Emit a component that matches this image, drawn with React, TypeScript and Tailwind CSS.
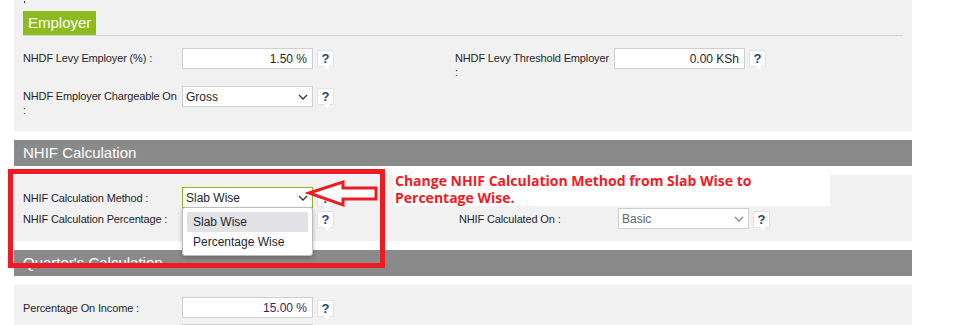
import React from 'react';

const labelCls = "w-[159px] shrink-0 whitespace-nowrap text-[11px] leading-[14px] tracking-[-0.15px] text-[#1f1f2a]";

function Help() {
  return (
    <div className="relative ml-[4px] mt-[2px] flex h-[17px] w-[17px] items-center justify-center rounded-[2px] border border-[#e2e2e2] bg-white">
      <span className="text-[13px] font-bold leading-none text-[#2b4470]">?</span>
      <span className="absolute -bottom-[4px] left-[6px] h-0 w-0 border-x-[3px] border-t-[4px] border-x-transparent border-t-white" />
    </div>
  );
}

function Chevron({ color = '#333' }: { color?: string }) {
  return (
    <svg width="10" height="6" viewBox="0 0 10 6" className="mr-[4px]">
      <polyline points="1,1 5,5 9,1" fill="none" stroke={color} strokeWidth="1.3" />
    </svg>
  );
}

function TextInput({ value, color = 'text-[#1f1f2a]' }: { value: string; color?: string }) {
  return (
    <div className={`flex h-[21px] w-[131px] items-center justify-end border border-[#cfcfcf] bg-white pr-[5px] text-[12px] ${color}`}>
      {value}
    </div>
  );
}

function Select({ value, focused = false, muted = false }: { value: string; focused?: boolean; muted?: boolean }) {
  return (
    <div
      className={`flex h-[21px] w-[131px] items-center justify-between bg-white pl-[3px] text-[12px] border ${
        focused ? 'border-[#8ab81e]' : 'border-[#cfcfcf]'
      } ${muted ? 'text-[#666]' : 'text-[#1f1f2a]'}`}
    >
      <span>{value}</span>
      <Chevron color={muted ? '#888' : '#333'} />
    </div>
  );
}

function Header({ title }: { title: string }) {
  return (
    <div className="flex h-[26px] items-center bg-[#8a8a8a] px-[9px] text-[15px] text-white">
      {title}
    </div>
  );
}

export default function App() {
  return (
    <div
      className="relative h-[325px] w-[966px] overflow-hidden bg-white"
      style={{ fontFamily: '"Liberation Sans", Arial, sans-serif' }}
    >
      <div className="ml-[14px] flex w-[898px] flex-col">
        {/* Employer panel */}
        <div className="flex h-[131px] flex-col bg-[#f1f1f1] px-[9px]">
          <div className="h-[11px]">
            {/* tail of the colon from the row above */}
            <div className="ml-[1px] mt-[1px] h-[2px] w-[1px] bg-[#3a1f4a]" />
          </div>
          <div className="flex border-b border-[#d3d3d3]">
            <div className="flex h-[24px] items-center bg-[#8cbb1f] px-[5px] text-[15px] text-white">Employer</div>
          </div>
          <div className="mt-[12px] grid h-[38px] grid-cols-[432px_1fr]">
            <div className="flex items-start">
              <div className={`${labelCls} pt-[3px]`}>NHDF Levy Employer (%) :</div>
              <TextInput value="1.50 %" />
              <Help />
            </div>
            <div className="flex items-start">
              <div className={`${labelCls} pt-[3px]`}>
                NHDF Levy Threshold Employer
                <br />
                <span className="text-[#3a1f4a]">:</span>
              </div>
              <TextInput value="0.00 KSh" />
              <Help />
            </div>
          </div>
          <div className="grid h-[38px] grid-cols-[432px_1fr]">
            <div className="flex items-start">
              <div className={`${labelCls} pt-[3px]`}>
                NHDF Employer Chargeable On
                <br />
                <span className="text-[#3a1f4a]">:</span>
              </div>
              <Select value="Gross" />
              <Help />
            </div>
          </div>
        </div>

        <div className="h-[9px]" />
        <Header title="NHIF Calculation" />
        <div className="h-[9px]" />

        {/* NHIF panel */}
        <div className="flex h-[66px] flex-col bg-[#f1f1f1] px-[9px] pt-[12px]">
          <div className="grid h-[21px] grid-cols-[436px_1fr]">
            <div className="flex items-center">
              <div className={labelCls}>NHIF Calculation Method :</div>
              <Select value="Slab Wise" focused />
              <Help />
            </div>
          </div>
          <div className="grid h-[21px] grid-cols-[436px_1fr]">
            <div className="flex items-center">
              <div className={labelCls}>NHIF Calculation Percentage :</div>
              <TextInput value="" />
              <Help />
            </div>
            <div className="flex items-center">
              <div className={labelCls}>NHIF Calculated On :</div>
              <Select value="Basic" muted />
              <Help />
            </div>
          </div>
        </div>

        <div className="h-[9px]" />
        <Header title="Quarter's Calculation" />
        <div className="h-[9px]" />

        {/* Quarter panel */}
        <div className="flex h-[60px] flex-col gap-[6px] bg-[#f1f1f1] px-[9px] pt-[12px]">
          <div className="flex items-center">
            <div className={labelCls}>Percentage On Income :</div>
            <TextInput value="15.00 %" color="text-[#3b1f5a]" />
            <Help />
          </div>
          <div className="flex items-center">
            <div className={labelCls}></div>
            <TextInput value="" />
          </div>
        </div>
      </div>

      {/* open dropdown */}
      <div className="absolute left-[182px] top-[207px] h-[49px] w-[131px] rounded-[3px] border border-[#bdbdbd] bg-white px-[4px] pt-[4px] text-[12px] text-[#1f1f2a] shadow-[0_2px_4px_rgba(0,0,0,0.25)]">
        <div className="flex h-[20px] items-center rounded-[2px] bg-[#e1e1e6] pl-[6px]">Slab Wise</div>
        <div className="flex h-[20px] items-center pl-[6px]">Percentage Wise</div>
      </div>

      {/* annotation */}
      <div className="absolute left-[8px] top-[169px] h-[99px] w-[377px] border-[5px] border-[#ed1c24]" />
      <svg className="absolute left-[305px] top-[179px]" width="78" height="30" viewBox="0 0 78 30">
        <polygon
          points="4,14 38,3 38,9 71,9 71,20 38,20 38,26"
          fill="white"
          stroke="#ed1c24"
          strokeWidth="3"
          strokeLinejoin="miter"
        />
      </svg>
      <div
        className="absolute left-[393px] top-[172px] h-[34px] w-[437px] bg-white pl-[2px] text-[14px] font-bold leading-[17px] text-[#ee1c25]"
        style={{ fontFamily: '"Open Sans", sans-serif' }}
      >
        Change NHIF Calculation Method from Slab Wise to
        <br />
        Percentage Wise.
      </div>
    </div>
  );
}
